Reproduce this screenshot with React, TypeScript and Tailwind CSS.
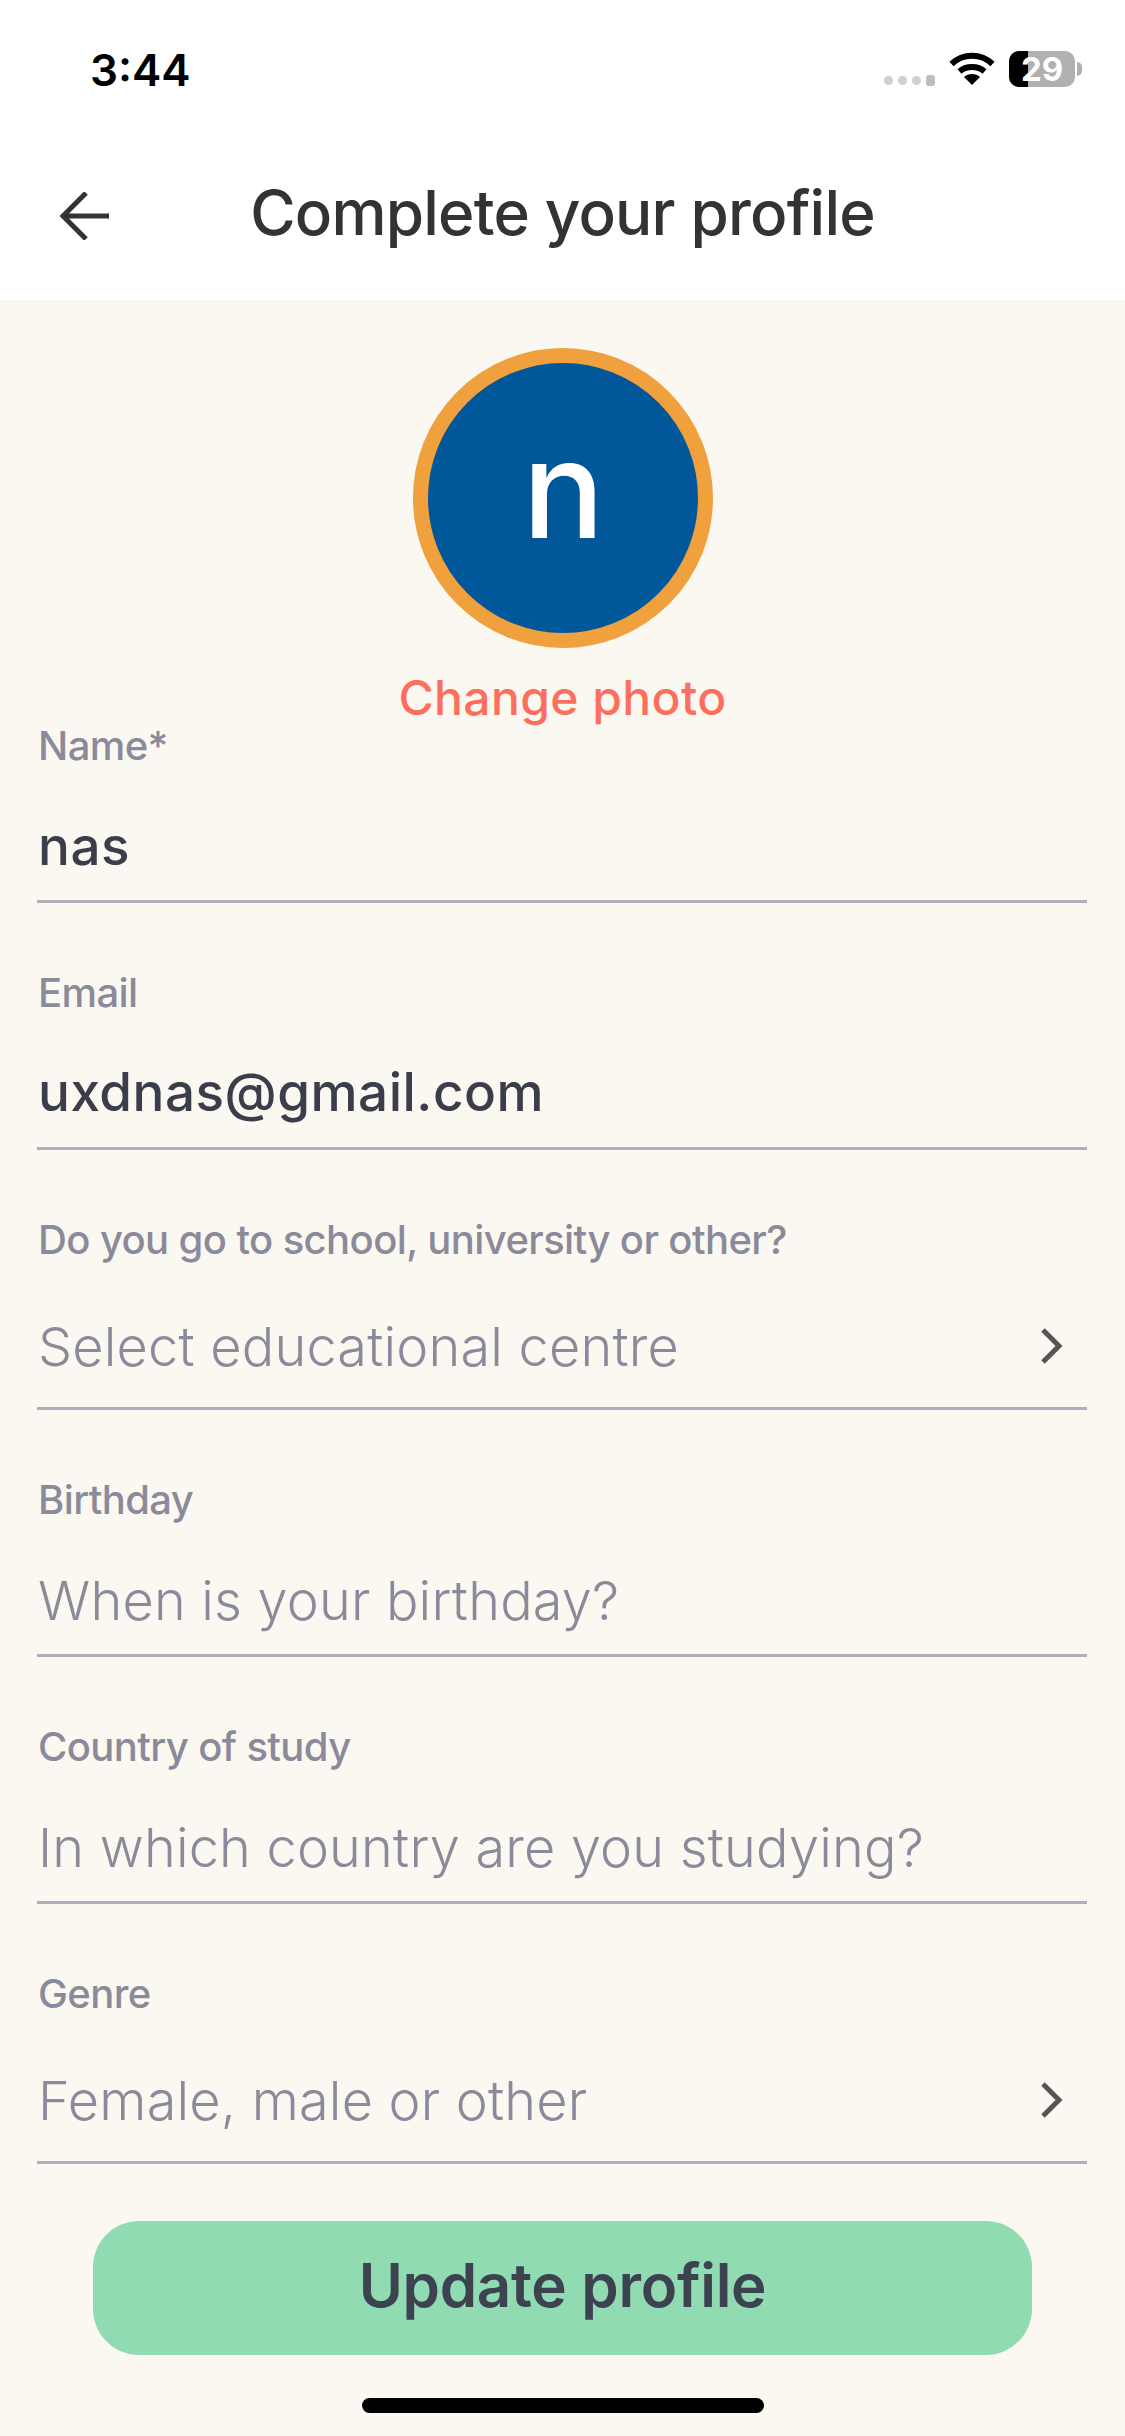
import React from 'react'

const Chevron = () => (
  <svg width="24" height="38" viewBox="0 0 24 38" fill="none" className="shrink-0 mr-[23px]">
    <path d="M3 3 L19 19 L3 35" stroke="#555555" strokeWidth="5" />
  </svg>
)

const Field = ({ label, value, placeholder, chevron, first }: { label: string; value?: string; placeholder?: string; chevron?: boolean; first?: boolean }) => (
  <div className={`border-b-[3px] border-[#b0aebb] pl-[1px] ${first ? '' : 'pt-[68px]'}`}>
    <div className="h-[44px] leading-[44px] text-[40px] font-medium text-[#8a8a9a] tracking-[-0.6px]">{label}</div>
    <div className={`flex items-center justify-between h-[72px] ${chevron ? 'mt-[48px] mb-[25px]' : first ? 'mt-[43px] mb-[17px]' : 'mt-[42px] mb-[18px]'}`}>
      {value ? (
        <span className="text-[53px] font-medium text-[#3b3d4a] tracking-[0.5px]">{value}</span>
      ) : (
        <span className="text-[54px] font-light text-[#8a8a9a] tracking-[0.2px]">{placeholder}</span>
      )}
      {chevron && <Chevron />}
    </div>
  </div>
)

export default function App() {
  return (
    <div className="w-[1125px] h-[2436px] overflow-hidden bg-[#fbf8f2] font-['Inter',sans-serif]">
      <div className="bg-white h-[300px]">
        <div className="h-[140px] flex justify-between pl-[90px] pr-[43px] pt-[46px]">
          <span className="text-[44px] leading-[48px] font-semibold text-black">3:44</span>
          <div className="flex items-start gap-[14px] pt-[5px]">
            <div className="flex items-center gap-[5px] mt-[24px]">
              <span className="w-[9px] h-[9px] rounded-full bg-[#cfcfcf]" />
              <span className="w-[9px] h-[9px] rounded-full bg-[#cfcfcf]" />
              <span className="w-[9px] h-[9px] rounded-full bg-[#cfcfcf]" />
              <span className="w-[9px] h-[11px] rounded-[3px] bg-[#bdbdbd]" />
            </div>
            <svg width="46" height="34" viewBox="0 0 46 34" fill="none">
              <path d="M2.5 13 C14 2 32 2 43.5 13" stroke="#000" strokeWidth="6" />
              <path d="M10.5 20.5 C17 14.5 29 14.5 35.5 20.5" stroke="#000" strokeWidth="6" />
              <path d="M15 26 C19 22 27 22 31 26 L23 34 Z" fill="#000" />
            </svg>
            <div className="flex items-center">
              <div className="relative w-[66px] h-[36px]">
                <div className="h-full rounded-[10px] overflow-hidden bg-[#b0b0b0]">
                  <div className="w-[19px] h-full bg-black" />
                </div>
                <span className="absolute inset-0 flex items-center justify-center text-[33px] leading-none font-bold text-white">29</span>
              </div>
              <span className="w-[5px] h-[14px] ml-[2px] rounded-r-full bg-[#b0b0b0]" />
            </div>
          </div>
        </div>
        <div className="grid grid-cols-[1fr_auto_1fr] items-center h-[130px] px-[60px] pt-[22px]">
          <svg width="50" height="48" viewBox="0 0 50 48" fill="none">
            <path d="M26 1 L3 24 L26 47 M3 24 H49" stroke="#333333" strokeWidth="5" />
          </svg>
          <h1 className="text-[62px] font-medium text-[#333333] tracking-[-0.8px] leading-none mb-[6px]">Complete your profile</h1>
          <span />
        </div>
      </div>

      <div className="flex flex-col items-center pt-[48px]">
        <div className="w-[300px] h-[300px] rounded-full border-[15px] border-[#f0a03c] bg-[#00589b] flex items-center justify-center">
          <span className="text-[136px] leading-none font-medium text-white pb-[18px] pl-[2px]">n</span>
        </div>
        <div className="h-[52px] mt-[24px] leading-[52px] text-[48px] font-medium text-[#fb6f5c] tracking-[0.4px]">Change photo</div>
      </div>

      <div className="px-[37px] mr-[1px]">
        <Field first label="Name*" value="nas" />
        <Field label="Email" value="uxdnas@gmail.com" />
        <Field label="Do you go to school, university or other?" placeholder="Select educational centre" chevron />
        <Field label="Birthday" placeholder="When is your birthday?" />
        <Field label="Country of study" placeholder="In which country are you studying?" />
        <Field label="Genre" placeholder="Female, male or other" chevron />
      </div>

      <div className="mx-[93px] mt-[57px] h-[134px] rounded-[46px] bg-[#90dbb2] flex items-center justify-center pb-[6px] text-[60px] font-semibold text-[#3d4250] tracking-[-0.3px]">
        Update profile
      </div>
      <div className="mx-auto mt-[43px] w-[402px] h-[15px] rounded-full bg-black" />
    </div>
  )
}
